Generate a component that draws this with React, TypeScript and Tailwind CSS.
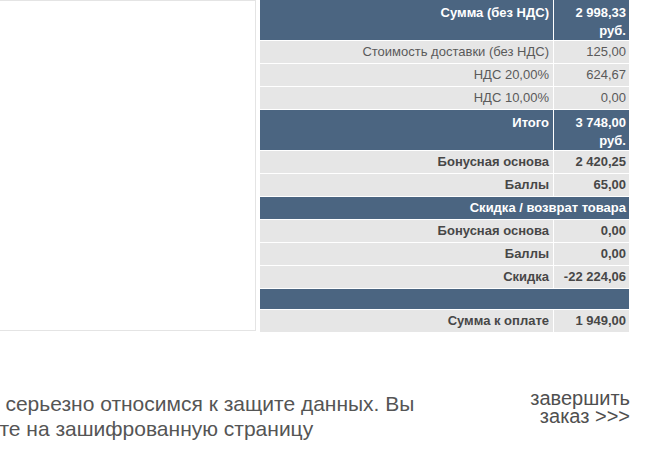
import React from "react";

type Row =
  | { kind: "head"; label: string; value?: string; unit?: string }
  | { kind: "plain"; label: string; value: string }
  | { kind: "bold"; label: string; value: string }
  | { kind: "band"; label: string };

const rows: Row[] = [
  { kind: "head", label: "Сумма (без НДС)", value: "2 998,33", unit: "руб." },
  { kind: "plain", label: "Стоимость доставки (без НДС)", value: "125,00" },
  { kind: "plain", label: "НДС 20,00%", value: "624,67" },
  { kind: "plain", label: "НДС 10,00%", value: "0,00" },
  { kind: "head", label: "Итого", value: "3 748,00", unit: "руб." },
  { kind: "bold", label: "Бонусная основа", value: "2 420,25" },
  { kind: "bold", label: "Баллы", value: "65,00" },
  { kind: "band", label: "Скидка / возврат товара" },
  { kind: "bold", label: "Бонусная основа", value: "0,00" },
  { kind: "bold", label: "Баллы", value: "0,00" },
  { kind: "bold", label: "Скидка", value: "-22 224,06" },
  { kind: "band", label: "" },
  { kind: "bold", label: "Сумма к оплате", value: "1 949,00" },
];

const App = () => {
  return (
    <div className="w-[660px] h-[459px] overflow-hidden bg-white font-['Liberation_Sans',Arial,sans-serif]">
      <div className="flex items-start">
        {/* empty box on the left, cut by the window edge */}
        <div className="-ml-[10px] w-[266px] h-[331px] border border-[#e4e4e4] bg-white shrink-0"></div>

        <table className="ml-[3px] -mt-[1px] w-[371px] border-separate border-spacing-[1px] text-[13px] shrink-0">
          <tbody>
            {rows.map((r, i) => {
              if (r.kind === "head") {
                return (
                  <tr key={i} className="bg-[#4b6581] text-white font-bold align-top">
                    <td className="w-[293px] pt-[4px] pb-0 pr-[4px] text-right leading-[18px] h-[39px]">
                      {r.label}
                    </td>
                    <td className="w-[75px] pt-[4px] pb-0 pr-[3px] text-right leading-[18px]">
                      {r.value}
                      <br />
                      {r.unit}
                    </td>
                  </tr>
                );
              }
              if (r.kind === "band") {
                return (
                  <tr key={i} className="bg-[#4b6581] text-white font-bold">
                    <td
                      colSpan={2}
                      className={
                        r.label
                          ? "h-[22px] p-0 pr-[3px] text-right leading-[22px]"
                          : "h-[20px] p-0 pr-[3px] text-right leading-[20px]"
                      }
                    >
                      {r.label}
                    </td>
                  </tr>
                );
              }
              return (
                <tr
                  key={i}
                  className={
                    r.kind === "bold"
                      ? "bg-[#e6e6e6] text-[#474747] font-bold"
                      : "bg-[#e6e6e6] text-[#5a5a5a]"
                  }
                >
                  <td className="h-[22px] p-0 pr-[4px] text-right leading-[22px]">{r.label}</td>
                  <td className="h-[22px] p-0 pr-[3px] text-right leading-[22px]">{r.value}</td>
                </tr>
              );
            })}
          </tbody>
        </table>
      </div>

      <div className="flex justify-between items-start mt-[57px]">
        <div className="text-[21px] leading-[25px] text-[#555555] whitespace-nowrap mt-[1px]">
          <div className="-ml-[33px]">Мы серьезно относимся к защите данных. Вы</div>
          <div className="-ml-[92px]">переходите на зашифрованную страницу</div>
        </div>
        <a href="#" className="pr-[30px] text-right text-[20px] leading-[17.5px] text-[#4f4f4f]">
          завершить
          <br />
          заказ &gt;&gt;&gt;
        </a>
      </div>
    </div>
  );
};

export default App;
